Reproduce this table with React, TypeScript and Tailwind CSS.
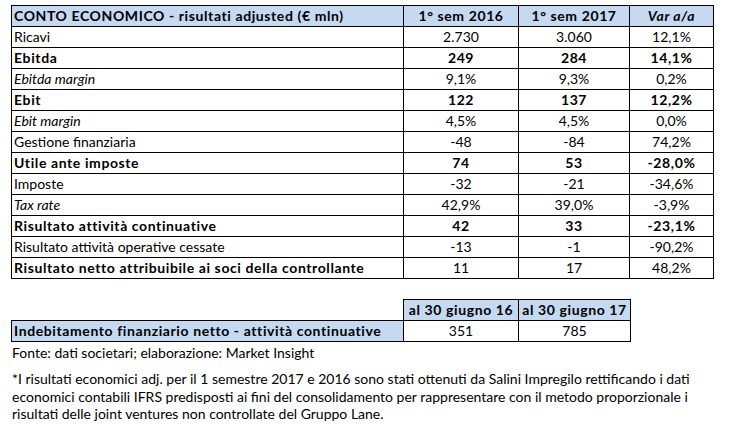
const rows: { label: string; v: [string, string, string]; style?: "b" | "i"; plainValues?: boolean }[] = [
  { label: "Ricavi", v: ["2.730", "3.060", "12,1%"] },
  { label: "Ebitda", v: ["249", "284", "14,1%"], style: "b" },
  { label: "Ebitda margin", v: ["9,1%", "9,3%", "0,2%"], style: "i" },
  { label: "Ebit", v: ["122", "137", "12,2%"], style: "b" },
  { label: "Ebit margin", v: ["4,5%", "4,5%", "0,0%"], style: "i" },
  { label: "Gestione finanziaria", v: ["-48", "-84", "74,2%"] },
  { label: "Utile ante imposte", v: ["74", "53", "-28,0%"], style: "b" },
  { label: "Imposte", v: ["-32", "-21", "-34,6%"] },
  { label: "Tax rate", v: ["42,9%", "39,0%", "-3,9%"], style: "i" },
  { label: "Risultato attività continuative", v: ["42", "33", "-23,1%"], style: "b" },
  { label: "Risultato attività operative cessate", v: ["-13", "-1", "-90,2%"] },
  // last row: only the label is bold
  { label: "Risultato netto attribuibile ai soci della controllante", v: ["11", "17", "48,2%"], style: "b", plainValues: true },
]

const cell = "border border-black h-[21px] p-0 leading-[20px]"
const bold = "font-bold tracking-[0.6px]"

export default function App() {
  return (
    <div className="w-[738px] h-[424px] bg-white text-black text-[14px] font-['Lato','Open_Sans',sans-serif] pl-[11px] pt-[5px]">
      <table className="table-fixed border-collapse w-[702px]">
        <colgroup>
          <col className="w-[392px]" />
          <col className="w-[115px]" />
          <col className="w-[111px]" />
          <col className="w-[84px]" />
        </colgroup>
        <thead>
          <tr className={`bg-[#c5d9f1] ${bold}`}>
            <td className={`${cell} text-left pl-[2px]`}>CONTO ECONOMICO - risultati adjusted (€ mln)</td>
            <td className={`${cell} text-center`}>1° sem 2016</td>
            <td className={`${cell} text-center`}>1° sem 2017</td>
            <td className={`${cell} text-center italic`}>Var a/a</td>
          </tr>
        </thead>
        <tbody>
          {rows.map((r) => (
            <tr key={r.label}>
              <td className={`${cell} pl-[2px] whitespace-nowrap ${r.style === "i" ? "italic" : ""} ${r.style === "b" ? bold : ""}`}>
                {r.label}
              </td>
              {r.v.map((x, i) => (
                <td key={i} className={`${cell} text-center ${r.style === "b" && !r.plainValues ? bold : ""}`}>
                  {x}
                </td>
              ))}
            </tr>
          ))}
        </tbody>
      </table>

      <table className="table-fixed border-collapse w-[619px] mt-[20px]">
        <colgroup>
          <col className="w-[392px]" />
          <col className="w-[115px]" />
          <col className="w-[112px]" />
        </colgroup>
        <tbody>
          <tr className={bold}>
            <td className="p-0 h-[21px]" />
            <td className={`${cell} bg-[#c5d9f1] text-center whitespace-nowrap`}>al 30 giugno 16</td>
            <td className={`${cell} bg-[#c5d9f1] text-center whitespace-nowrap`}>al 30 giugno 17</td>
          </tr>
          <tr>
            <td className={`${cell} bg-[#c5d9f1] ${bold} pl-[2px] whitespace-nowrap`}>Indebitamento finanziario netto - attività continuative</td>
            <td className={`${cell} text-center`}>351</td>
            <td className={`${cell} text-center`}>785</td>
          </tr>
        </tbody>
      </table>

      <p className="leading-[22px] pl-[1px]">Fonte: dati societari; elaborazione: Market Insight</p>
      <p className="mt-[6px] leading-[17.5px] pl-[1px] w-[700px]">
        *I risultati economici adj. per il 1 semestre 2017 e 2016 sono stati ottenuti da Salini Impregilo rettificando i dati
        economici contabili IFRS predisposti ai fini del consolidamento per rappresentare con il metodo proporzionale i
        risultati delle joint ventures non controllate del Gruppo Lane.
      </p>
    </div>
  )
}
